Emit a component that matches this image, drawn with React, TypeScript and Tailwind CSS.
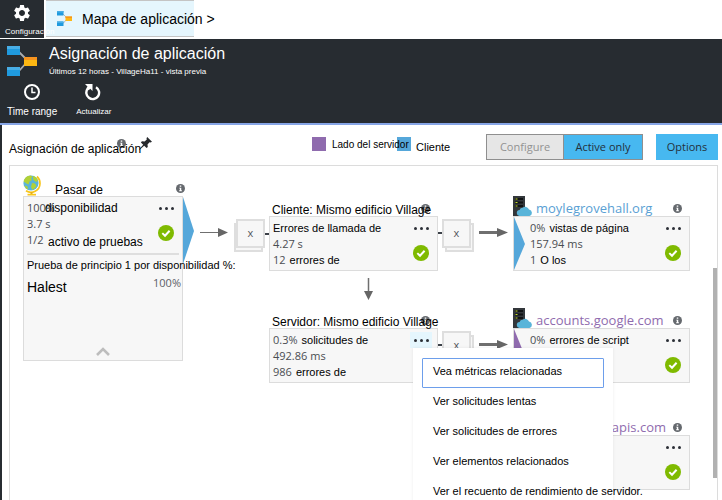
import React from 'react';
import { MdSettings } from 'react-icons/md';

const ARIAL = "font-['Liberation_Sans',Arial,sans-serif]";
const SEGOE = "font-['Open_Sans','Noto_Sans',sans-serif]";

function MapIcon({ className }: { className: string }) {
  return (
    <svg viewBox="0 0 30 30" className={className} aria-hidden="true">
      <path d="M12 6L20 14M12 25L20 16" stroke="#a9adb1" strokeWidth="1.8" fill="none" />
      <rect x="0" y="0" width="13" height="9" fill="#1f9ade" />
      <rect x="0" y="0" width="13" height="3" fill="#48aee6" />
      <rect x="0" y="21" width="13" height="9" fill="#1f9ade" />
      <rect x="0" y="21" width="13" height="3" fill="#48aee6" />
      <rect x="17" y="11" width="13" height="9" fill="#fdb813" />
      <rect x="17" y="11" width="13" height="3" fill="#f7941e" />
    </svg>
  );
}

function InfoIcon({ className = '' }: { className?: string }) {
  return (
    <svg viewBox="0 0 18 18" className={`size-[9px] shrink-0 ${className}`} aria-hidden="true">
      <circle cx="9" cy="9" r="9" fill="#65696e" />
      <path d="M7.5 3h3v2.6h-3zM6.5 7.4h4v5.2h1.3v1.8H6.3v-1.8h1.4V9.2H6.5z" fill="#fff" />
    </svg>
  );
}

function CheckIcon() {
  return (
    <svg viewBox="0 0 16 16" className="size-4 shrink-0" aria-hidden="true">
      <circle cx="8" cy="8" r="8" fill="#7fba00" />
      <path d="M4.3 8.1l2.7 2.6 4.6-5" stroke="#fff" strokeWidth="2" fill="none" />
    </svg>
  );
}

function PinIcon({ className }: { className: string }) {
  return (
    <svg viewBox="0 0 13 13" className={className} aria-hidden="true">
      <path d="M8.2 0L13 4.7l-1.5.7-1-.2-2 2.2.3 2.6-1.2 1L5.200 8.700 0.600 12.700 0.200 12.300 4.200 7.700 1.900 5.400l1-1.100 2.700.2L7.800 2.400l-.3-1.100z" fill="#26292c" />
    </svg>
  );
}

function GlobeIcon() {
  return (
    <svg viewBox="0 0 19 21" className="h-[21px] w-[19px]" aria-hidden="true">
      <path d="M14 1.500A9 9 0 0 1 17 8.500A9 9 0 0 1 3 15.800" fill="none" stroke="#f8c51c" strokeWidth="1.700" />
      <rect x="7.500" y="17" width="2" height="2" fill="#e6ae14" />
      <rect x="4.500" y="18.800" width="8.500" height="1.700" fill="#f8c51c" />
      <circle cx="8" cy="8" r="7.600" fill="#59b4d9" />
      <path d="M.6 6.500C1.200 3 4 .6 7.500.4L9.500 1.500 8 3.500 9 5 6.500 6.500 5.500 9.500 3.500 8.500zM10 .8l3 1.500 2 3-1.500 1.700-2-1L10 4zM9 8l3 .5 1.500 2.500-2 2.500-2 1.500-1.500-3zM1.500 10.500l3 1 .5 3-2-1z" fill="#b1d137" />
    </svg>
  );
}

function ServerIcon() {
  return (
    <svg viewBox="0 0 20 20" className="size-5 shrink-0" aria-hidden="true">
      <rect width="12" height="20" fill="#33373b" />
      <path d="M2 2h8v2H2zM2 5.500h8v2H2zM2 9h8v2H2z" fill="#101214" />
      <path d="M2.500 2.500h2v1h-2zM2.500 6h2v1h-2zM2.500 9.500h2v1h-2z" fill="#c5dc2b" />
      <path d="M7 20a3 3 0 0 1-.4-6 3 3 0 0 1 3-2.200 4 4 0 0 1 6.400 1.600 3.400 3.400 0 0 1 .5 6.600z" fill="#59b4d9" />
    </svg>
  );
}

function MoreButton({ active = false }: { active?: boolean }) {
  return (
    <button
      type="button"
      aria-label="Más"
      className={`flex h-4 w-[22px] items-center justify-center gap-[3px] ${active ? 'bg-[#e5f6fd]' : ''}`}
    >
      <span className="size-[3px] rounded-full bg-[#2b2f36]" />
      <span className="size-[3px] rounded-full bg-[#2b2f36]" />
      <span className="size-[3px] rounded-full bg-[#2b2f36]" />
    </button>
  );
}

type Row = { value?: string; label?: string };

function Rows({ rows }: { rows: Row[] }) {
  return (
    <div className="flex flex-col whitespace-nowrap leading-4">
      {rows.map((row, i) => (
        <p key={i} className="flex gap-1">
          {row.value && <span className={`${SEGOE} text-[11px] text-[#4a4d52]`}>{row.value}</span>}
          {row.label && <span className={`${ARIAL} text-[11px] text-black`}>{row.label}</span>}
        </p>
      ))}
    </div>
  );
}

function Node({
  place,
  header,
  rows,
  pad,
  wedge,
  active,
}: {
  place: string;
  header: React.ReactNode;
  rows: Row[];
  pad: string;
  wedge?: string;
  active?: boolean;
}) {
  return (
    <section className={`absolute ${place}`}>
      <header className="relative z-10 flex h-[22px] items-end pr-2">{header}</header>
      <div className={`relative flex h-[55px] justify-between border border-[#dcdcdc] bg-[#f7f7f7] pt-[3px] pr-[5px] ${pad}`}>
        {wedge && (
          <svg viewBox="0 0 11 53" className="absolute top-0 left-0 h-[53px] w-[11px]" aria-hidden="true">
            <path d="M0 0L11 27L0 53Z" fill={wedge} />
          </svg>
        )}
        <Rows rows={rows} />
        <div className="flex flex-col items-center gap-[9px]">
          <MoreButton active={active} />
          <CheckIcon />
        </div>
      </div>
    </section>
  );
}

function EdgeStack({ place }: { place: string }) {
  return (
    <div className={`absolute size-[29px] ${place}`}>
      <button type="button" className={`relative z-10 size-full border-2 border-[#dedede] bg-[#f7f7f7] text-[11px] text-[#55585c] ${SEGOE}`}>
        x
      </button>
    </div>
  );
}

const menuItems = [
  'Ver solicitudes lentas',
  'Ver solicitudes de errores',
  'Ver elementos relacionados',
  'Ver el recuento de rendimiento de servidor.',
];

export default function App() {
  return (
    <div className={`flex min-h-screen flex-col overflow-hidden bg-white text-black ${ARIAL}`}>
      <nav className="flex h-[39px] items-start">
        <button type="button" className="relative z-10 flex h-[38px] w-11 flex-col items-start bg-[#272c31] pt-[3px] pl-[5px] text-white">
          <MdSettings className="ml-[7px] size-5" />
          <span className="mt-[3px] text-[8px] leading-3">Configuración</span>
        </button>
        <button
          type="button"
          className="ml-0.5 flex h-[37px] w-[148px] items-center gap-2.5 border-t border-b border-[#c4c4c4] bg-[#e5f6fd] pl-[11px] whitespace-nowrap"
        >
          <MapIcon className="size-[15px] shrink-0" />
          <span className="text-[14px] leading-5">Mapa de aplicación &gt;</span>
        </button>
      </nav>

      <header className="flex h-[86px] flex-col border-b-2 border-[#86a5e6] bg-[#272c31] pl-[7px] text-white">
        <div className="flex gap-3 pt-[5px]">
          <MapIcon className="mt-0.5 size-[30px]" />
          <div>
            <h1 className="text-[16px] leading-5">Asignación de aplicación</h1>
            <p className="mt-0.5 text-[8px] leading-3">Últimos 12 horas - VillageHa11 - vista previa</p>
          </div>
        </div>
        <div className="mt-[5px] flex gap-[19px]">
          <button type="button" className="flex flex-col items-center gap-[5px]">
            <svg viewBox="0 0 18 18" className="size-[18px]" fill="none" stroke="currentColor" strokeWidth="2" aria-hidden="true">
              <circle cx="9" cy="9" r="7" />
              <path d="M9 4.500V9.500H12.500" strokeWidth="1.500" />
            </svg>
            <span className="text-[10px] leading-3">Time range</span>
          </button>
          <button type="button" className="flex flex-col items-center gap-[5px]">
            <svg viewBox="2 0 18 18" className="size-[18px]" fill="none" stroke="currentColor" strokeWidth="2.400" aria-hidden="true">
              <path d="M13 4.200A6.400 6.400 0 1 1 4.800 5.600" />
              <path d="M2 1H9.500V8L7.200 5.700 5.800 7.200 3.400 5.200 4.500 3.500z" fill="currentColor" stroke="none" />
            </svg>
            <span className="text-[8px] leading-3">Actualizar</span>
          </button>
        </div>
      </header>

      <main className="flex flex-1 flex-col border-l-2 border-[#272c31] pr-1 pl-[7px]">
        <div className="flex h-10 items-center">
          <div className="relative pt-2">
            <InfoIcon className="absolute top-1.5 left-[108px]" />
            <PinIcon className="absolute top-1 left-[130px] size-[13px]" />
            <h2 className="relative text-[12px] leading-4">Asignación de aplicación</h2>
          </div>
          <div className="ml-auto flex w-[174px] items-start pt-0.5">
            <span className="size-3.5 bg-[#8f6bae]" />
            <span className="relative z-10 ml-1.5 w-[65px] text-[10px] leading-4 whitespace-nowrap">Lado del servidor</span>
            <span className="size-3.5 bg-[#55a7da]" />
            <span className="ml-[5px] pt-0.5 text-[11px] leading-4">Cliente</span>
          </div>
          <div className={`mt-1 flex h-[26px] border border-[#8f8f8f] text-[11px] ${SEGOE}`}>
            <button type="button" disabled className="w-[77px] border-r border-[#8f8f8f] bg-[#e6e6e6] text-[#929292]">
              Configure
            </button>
            <button type="button" className="w-[78px] bg-[#47b8f0] text-[#24313c]">
              Active only
            </button>
          </div>
          <button type="button" className={`mt-1 ml-[13px] h-[26px] w-[62px] bg-[#47b8f0] text-[11px] text-[#24313c] ${SEGOE}`}>
            Options
          </button>
        </div>

        <div className="relative min-h-[335px] flex-1 overflow-hidden border border-b-0 border-[#dcdcdc]">
          <svg className="absolute inset-0 h-full w-full" aria-hidden="true">
            <path d="M173 31L184 65L173 98Z" fill="#55a7da" />
            <g stroke="#6f6f6f" fill="none">
              <path d="M190 66.500H210" />
              <path d="M358.500 112V126" strokeWidth="1.500" />
              <path d="M469 66.500H490M469 178.500H490" strokeWidth="3" />
            </g>
            <path d="M208 62L218 66.500L208 71ZM354 125H363L358.500 134ZM487 62L498 66.500L487 71ZM487 174L498 178.500L487 183Z" fill="#666" />
            <path d="M254 68H259M428 67H432M428 179H432" stroke="#3c4148" strokeWidth="2" />
            <g fill="#f7f7f7" stroke="#dedede" strokeWidth="2">
              <rect x="225" y="58" width="27" height="27" />
              <rect x="436" y="58" width="27" height="27" />
              <rect x="436" y="170" width="27" height="27" />
            </g>
          </svg>

          <section className="absolute top-2 left-[13px] w-40">
            <header className="flex h-[22px] items-end">
              <GlobeIcon />
              <span className="relative z-10 ml-[13px] text-[12px] leading-3">Pasar de</span>
              <InfoIcon className="-mr-0.5 mb-[3px] ml-auto" />
            </header>
            <div className="h-[165px] border border-[#dcdcdc] bg-[#f7f7f7] px-[3px] pt-[3px]">
              <div className="flex justify-between whitespace-nowrap">
                <div className="leading-4">
                  <p className="flex">
                    <span className={`w-[18px] text-[11px] text-[#4a4d52] ${SEGOE}`}>100%</span>
                    <span className="text-[12px]">disponibilidad</span>
                  </p>
                  <p className={`text-[11px] text-[#4a4d52] ${SEGOE}`}>3.7 s</p>
                  <p className="flex">
                    <span className={`w-[21px] text-[11px] text-[#4a4d52] ${SEGOE}`}>1/2</span>
                    <span className="pt-0.5 text-[12px]">activo de pruebas</span>
                  </p>
                </div>
                <div className="flex flex-col items-center gap-[9px] pr-0.5">
                  <MoreButton />
                  <CheckIcon />
                </div>
              </div>
              <div className="mt-[3px] border-t-2 border-[#dedede] pt-0.5">
                <p className="relative z-10 text-[11px] leading-4 whitespace-nowrap">Prueba de principio 1 por disponibilidad %:</p>
                <div className="mt-0.5 flex justify-between">
                  <span className="pt-1 text-[14px] leading-4">Halest</span>
                  <span className={`-mr-0.5 text-[11px] leading-4 text-[#5c6066] ${SEGOE}`}>100%</span>
                </div>
              </div>
              <svg viewBox="0 0 14 9" className="mx-auto mt-[52px] h-[9px] w-3.5" aria-hidden="true">
                <path d="M1 8L7 2L13 8" fill="none" stroke="#bdbdbd" strokeWidth="2.600" />
              </svg>
            </div>
          </section>

          <EdgeStack place="top-[53px] left-[226px]" />
          <EdgeStack place="top-[53px] left-[432px]" />
          <EdgeStack place="top-[165px] left-[432px]" />

          <Node
            place="top-7 left-[259px] w-[169px]"
            pad="pl-[3px]"
            header={
              <>
                <span className="relative z-10 w-0 flex-1 pl-[3px] text-[12px] leading-3 whitespace-nowrap">Cliente: Mismo edificio Village</span>
                <InfoIcon className="mb-[3px]" />
              </>
            }
            rows={[{ label: 'Errores de llamada de' }, { value: '4.27 s' }, { value: '12', label: 'errores de' }]}
          />
          <Node
            place="top-[140px] left-[259px] w-[169px]"
            pad="pl-[3px]"
            active
            header={
              <>
                <span className="relative z-10 w-0 flex-1 pl-[3px] text-[12px] leading-3 whitespace-nowrap">Servidor: Mismo edificio Village</span>
                <InfoIcon className="mb-[3px]" />
              </>
            }
            rows={[{ value: '0.3%', label: 'solicitudes de' }, { value: '492.86 ms' }, { value: '986', label: 'errores de' }]}
          />
          <Node
            place="top-7 left-[503px] w-[177px]"
            pad="pl-4"
            wedge="#55a7da"
            header={
              <>
                <ServerIcon />
                <span className={`ml-[3px] text-[13px] leading-4 text-[#5a9fd4] ${SEGOE}`}>moylegrovehall.org</span>
                <InfoIcon className="mb-[3px] ml-auto" />
              </>
            }
            rows={[{ value: '0%', label: 'vistas de página' }, { value: '157.94 ms' }, { value: '1', label: 'O los' }]}
          />
          <Node
            place="top-[140px] left-[503px] w-[177px]"
            pad="pl-4"
            wedge="#8f6bae"
            header={
              <>
                <ServerIcon />
                <span className={`ml-[3px] text-[13px] leading-4 text-[#8f6bae] ${SEGOE}`}>accounts.google.com</span>
                <InfoIcon className="mb-[3px] ml-auto" />
              </>
            }
            rows={[{ value: '0%', label: 'errores de script' }]}
          />
          <Node
            place="top-[247px] left-[503px] w-[177px]"
            pad="pl-4"
            header={
              <>
                <span className={`ml-auto text-[13px] leading-4 text-[#8f6bae] ${SEGOE}`}>apis.com</span>
                <InfoIcon className="mb-[3px] ml-[7px]" />
              </>
            }
            rows={[]}
          />

          <div className="absolute top-[182px] left-[403px] z-20 flex w-[200px] flex-col bg-white px-[9px] pt-[10px] pb-2 text-[11px] shadow-[0_0_3px_rgba(0,0,0,0.08)]">
            <button type="button" className="h-[30px] rounded-[1px] border border-[#6d9eeb] pb-1 pl-[10px] text-left whitespace-nowrap">
              Vea métricas relacionadas
            </button>
            {menuItems.map((item) => (
              <button key={item} type="button" className="h-[30px] pb-1 pl-[11px] text-left whitespace-nowrap">
                {item}
              </button>
            ))}
          </div>

          <div className="absolute top-[102px] right-0 h-[210px] w-1 bg-[#b1b1b1]" />
        </div>
      </main>
    </div>
  );
}
